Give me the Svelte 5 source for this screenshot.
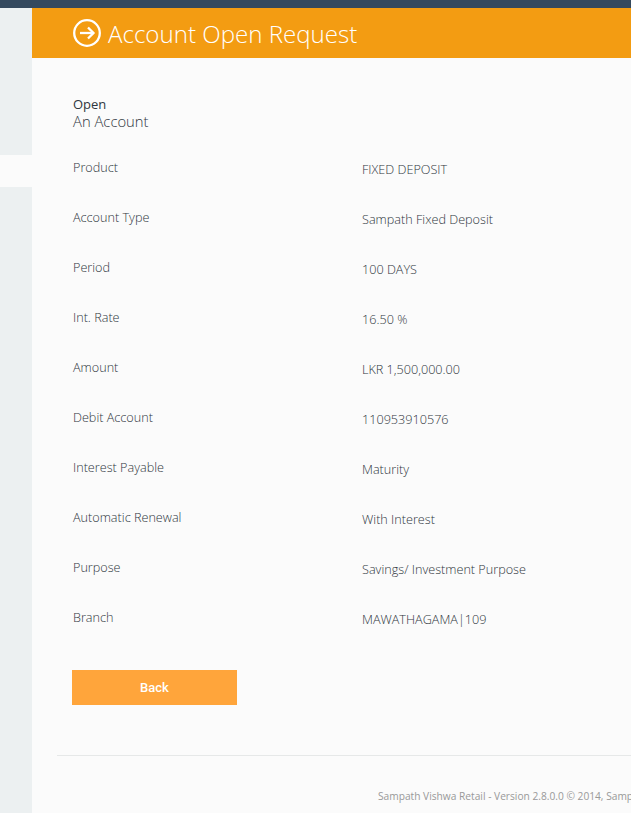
<script lang="ts">
  const rows = [
    ['Product', 'FIXED DEPOSIT'],
    ['Account Type', 'Sampath Fixed Deposit'],
    ['Period', '100 DAYS'],
    ['Int. Rate', '16.50 %'],
    ['Amount', 'LKR 1,500,000.00'],
    ['Debit Account', '110953910576'],
    ['Interest Payable', 'Maturity'],
    ['Automatic Renewal', 'With Interest'],
    ['Purpose', 'Savings/ Investment Purpose'],
    ['Branch', 'MAWATHAGAMA|109']
  ];
</script>

<div class="page">
  <div class="topbar"></div>
  <div class="body">
    <aside>
      <div class="tab"></div>
    </aside>
    <main>
      <header>
        <svg width="28" height="28" viewBox="0 0 28 28" fill="none" stroke="#fff" stroke-width="2.3">
          <circle cx="14" cy="14" r="12.8" />
          <line x1="7" y1="14" x2="20.5" y2="14" />
          <polyline points="15,8.5 20.5,14 15,19.5" />
        </svg>
        <h1>Account Open Request</h1>
      </header>
      <section class="content">
        <div class="intro">
          <div class="open">Open</div>
          <div class="an">An Account</div>
        </div>
        <div class="rows">
          {#each rows as [label, value]}
            <div class="row">
              <div class="label">{label}</div>
              <div class="value">{value}</div>
            </div>
          {/each}
        </div>
        <button class="back">Back</button>
      </section>
      <footer>
        <div class="copy">Sampath Vishwa Retail - Version 2.8.0.0 © 2014, Sampath Bank PLC. All rights reserved.</div>
      </footer>
    </main>
  </div>
</div>

<style>
  :global(body) {
    margin: 0;
    overflow: hidden;
    background: #fbfbfb;
  }
  .page {
    height: 813px;
    width: 631px;
    overflow: hidden;
    display: flex;
    flex-direction: column;
    font-family: 'Open Sans', 'Liberation Sans', sans-serif;
    color: #2f3640;
  }
  .topbar {
    height: 8px;
    flex-shrink: 0;
    background: #34495e;
  }
  .body {
    flex: 1;
    display: flex;
    min-height: 0;
  }
  aside {
    width: 32px;
    flex-shrink: 0;
    background: #ecf0f1;
    padding-top: 147px;
  }
  .tab {
    height: 32px;
    background: #fbfbfb;
  }
  main {
    flex: 1;
    min-width: 0;
    background: #fbfbfb;
  }
  header {
    height: 50px;
    background: #f39c12;
    display: flex;
    align-items: center;
    gap: 7px;
    padding-left: 41px;
  }
  h1 {
    margin: 0;
    font-size: 24.1px;
    font-weight: 300;
    color: #fff;
    white-space: nowrap;
  }
  .content {
    padding: 38px 0 0 41px;
  }
  .open {
    font-size: 13px;
    line-height: 17px;
    font-weight: 400;
  }
  .an {
    font-size: 14.8px;
    line-height: 17px;
    font-weight: 300;
  }
  .rows {
    margin-top: 28px;
  }
  .row {
    height: 50px;
    display: flex;
    font-size: 12.65px;
    font-weight: 300;
    line-height: 18px;
  }
  .label {
    width: 289px;
    flex-shrink: 0;
  }
  .value {
    padding-top: 2px;
    white-space: nowrap;
  }
  .back {
    display: block;
    width: 165px;
    height: 35px;
    margin: 12px 0 0 -1px;
    border: 0;
    background: #ffa53b;
    color: #fff;
    font-family: 'Roboto', sans-serif;
    font-size: 13px;
    font-weight: 500;
  }
  footer {
    margin: 50px 0 0 25px;
    border-top: 1px solid #e6e8e8;
    padding: 33px 0 0 321px;
    white-space: nowrap;
  }
  .copy {
    font-size: 10.2px;
    line-height: 14px;
    font-weight: 500;
    color: #999;
  }
</style>
